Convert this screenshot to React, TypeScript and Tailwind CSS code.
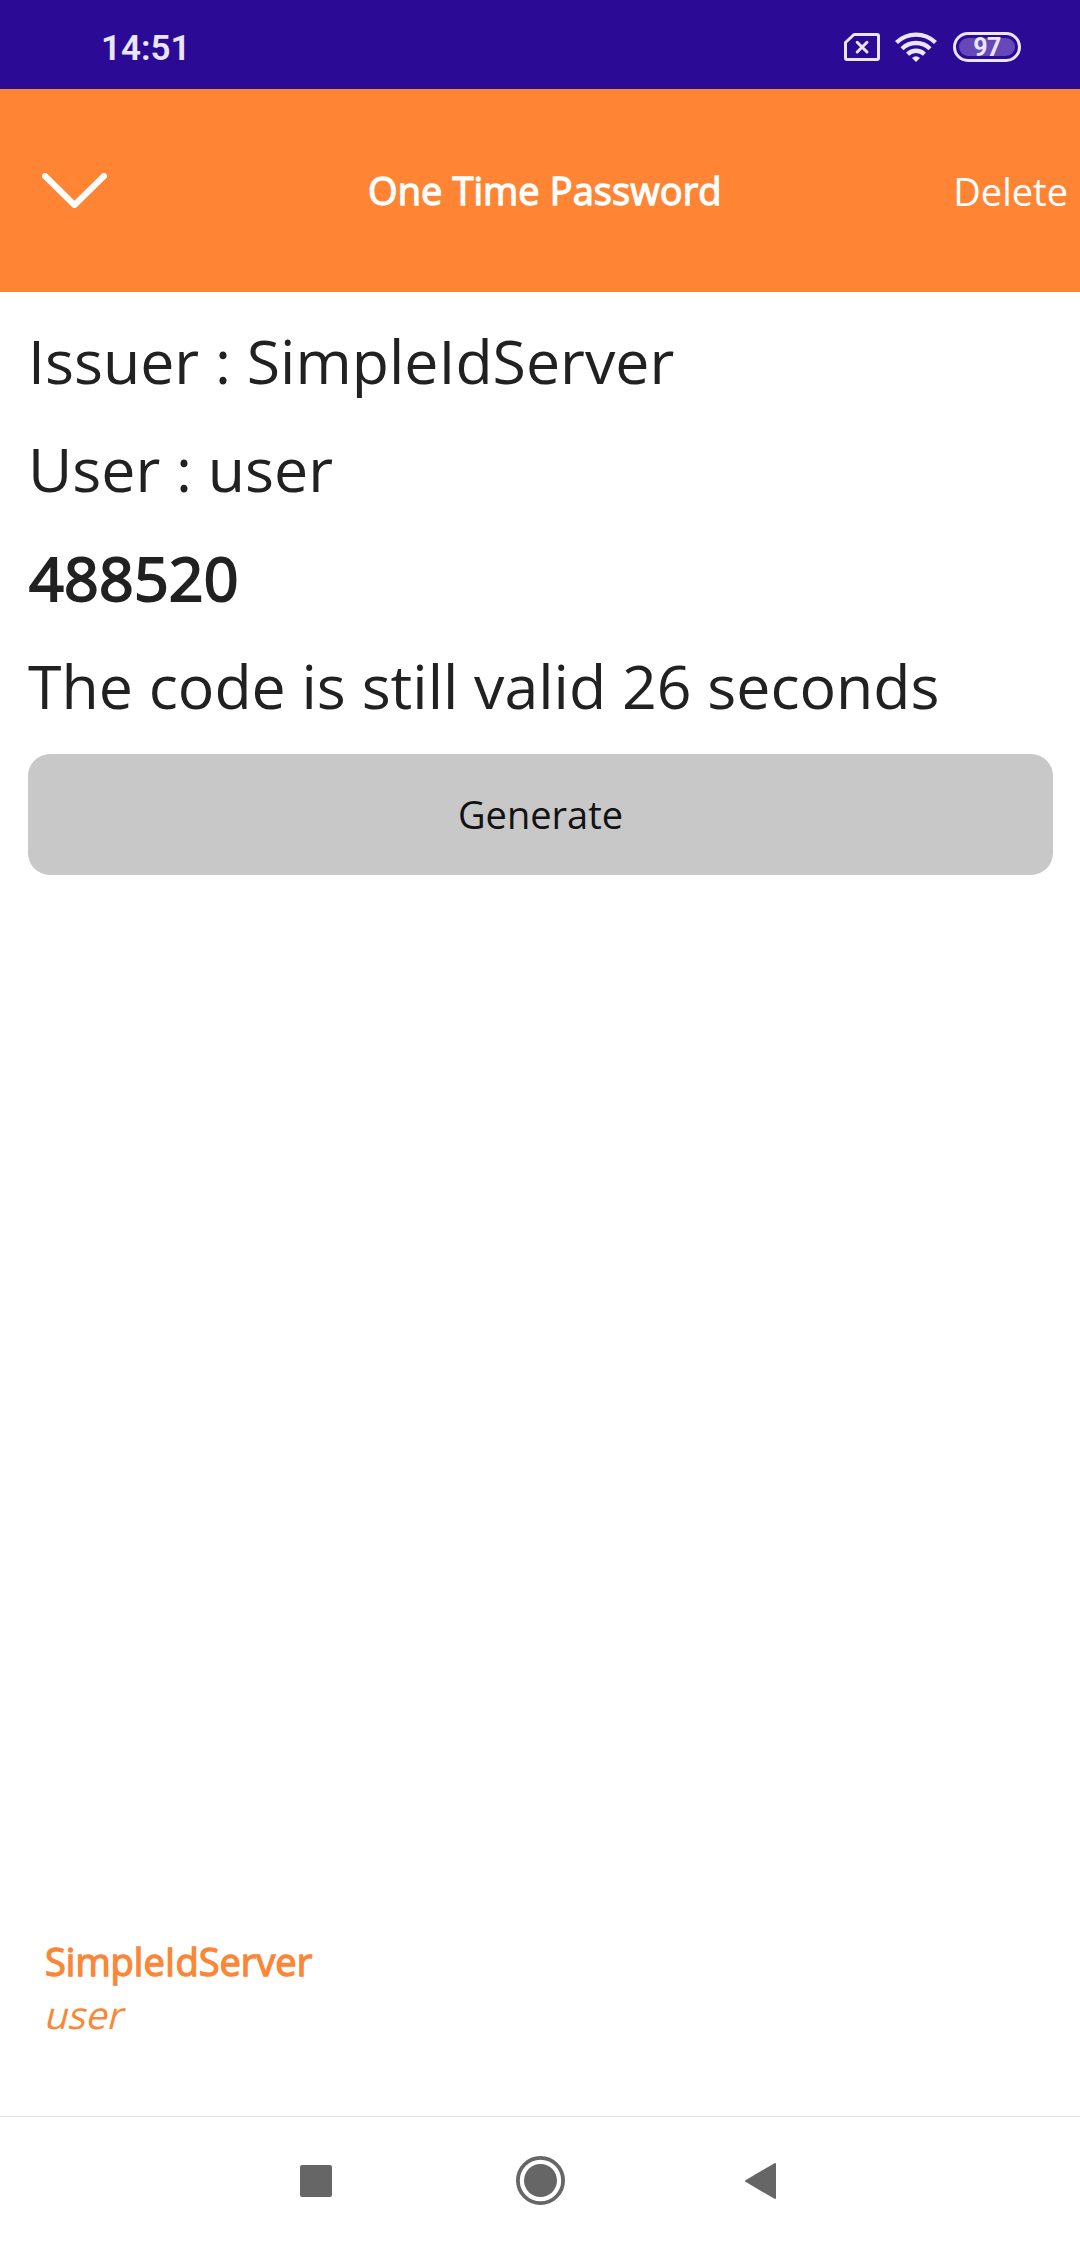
function StatusBar() {
  return (
    <div className="flex h-[89px] shrink-0 items-center justify-between bg-[#2b0a96] pl-[101px] pr-[59px] text-[#ebe5fa]">
      <span className="mt-[8px] font-['Roboto',sans-serif] text-[35px] leading-none font-semibold">14:51</span>
      <div className="mt-[5px] flex items-center">
        <svg className="h-[28px] w-[36px]" viewBox="0 0 36 28" fill="none" stroke="currentColor" strokeWidth="3">
          <path d="M10 1.5H33Q34.5 1.5 34.5 3V25Q34.5 26.5 33 26.5H3Q1.5 26.5 1.5 25V9.5Z" strokeLinejoin="round" />
          <path d="M13.2 9.3L23 19M23 9.3L13.2 19" strokeLinecap="round" />
        </svg>
        <svg className="ml-[15px] h-[30px] w-[42px]" viewBox="0 0 42 30" fill="none" stroke="currentColor" strokeWidth="4.3">
          <path d="M1.5 10.5A28 28 0 0 1 40.5 10.5" />
          <path d="M7 16.7A20 20 0 0 1 35 16.7" />
          <path d="M12.6 22.2A12 12 0 0 1 29.4 22.2" />
          <path d="M17 26Q21 22.6 25 26L21 30Z" fill="currentColor" stroke="none" />
        </svg>
        <div className="ml-[16px] flex h-[30px] w-[68px] items-center justify-center rounded-full border-[3px] border-current p-[3px]">
          <div className="flex h-full w-full items-center justify-center rounded-full bg-[#6748b8] font-['Roboto',sans-serif] text-[25px] leading-none font-bold tracking-[-0.6px]">
            <span>97</span>
          </div>
        </div>
      </div>
    </div>
  );
}

function Header() {
  return (
    <header className="grid h-[203px] shrink-0 grid-cols-[326px_auto_1fr] items-center bg-[#ff8534] pr-[12px] pl-[42px] text-[38px] leading-[52px] text-white">
      <svg className="-mt-[1px] h-[35px] w-[65px]" viewBox="0 0 65 35" fill="none" stroke="currentColor" strokeWidth="6" strokeLinecap="round" strokeLinejoin="round">
        <path d="M3 3L32.5 32L62 3" />
      </svg>
      <h1 className="-mt-[1px] tracking-[0.08px] [-webkit-text-stroke:1.3px_white]">One Time Password</h1>
      <span className="mt-[1px] justify-self-end">Delete</span>
    </header>
  );
}

function NavigationBar() {
  return (
    <nav className="flex h-[130px] shrink-0 items-center border-t border-[#e2e2e2] pb-[2px] pl-[300px] text-[#666666]">
      <div className="h-[32px] w-[32px] rounded-[2px] bg-current" />
      <svg className="ml-[184px] h-[49px] w-[49px]" viewBox="0 0 49 49" fill="currentColor">
        <circle cx="24.5" cy="24.5" r="22.6" fill="none" stroke="currentColor" strokeWidth="3.8" />
        <circle cx="24.5" cy="24.5" r="16.5" />
      </svg>
      <svg className="ml-[180px] h-[36px] w-[31px]" viewBox="0 0 31 36" fill="currentColor" stroke="currentColor" strokeWidth="2" strokeLinejoin="round">
        <path d="M30 1V35L1 18Z" />
      </svg>
    </nav>
  );
}

export default function App() {
  return (
    <div className="flex h-[2246px] w-[1080px] flex-col overflow-hidden bg-white font-['Open_Sans',sans-serif] text-[#212121]">
      <StatusBar />
      <Header />
      <main className="flex flex-1 flex-col pt-[15px] pr-[27px] pl-[28px] text-[60.8px] leading-[108.4px]">
        <p>Issuer : SimpleIdServer</p>
        <p>User : user</p>
        <p className="pl-px tracking-[0.2px] [-webkit-text-stroke:2px_#212121]">488520</p>
        <p>The code is still valid 26 seconds</p>
        <button className="mt-[13px] h-[121px] w-full rounded-[22px] bg-[#c8c8c8] text-[38px] leading-[52px] text-[#121212]">Generate</button>
      </main>
      <footer className="flex h-[181px] shrink-0 flex-col items-start px-[45px] text-[38px] leading-[52px] text-[#fa8637]">
        <p className="[-webkit-text-stroke:1.3px_#fa8637]">SimpleIdServer</p>
        <p className="mt-px ml-[2px] -skew-x-[14deg]">user</p>
      </footer>
      <NavigationBar />
    </div>
  );
}
